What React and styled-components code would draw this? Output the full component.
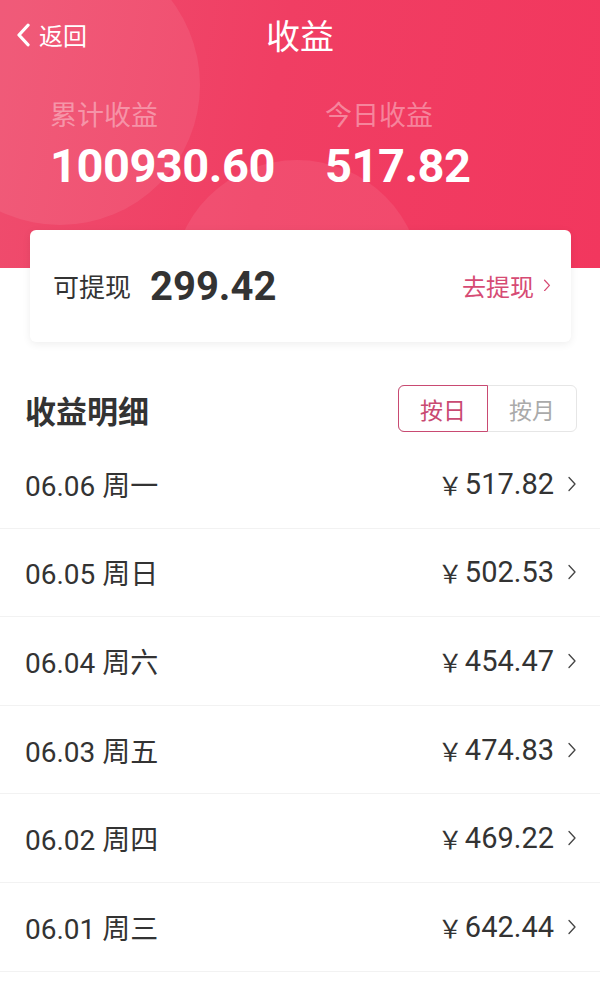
import styled, { createGlobalStyle } from "styled-components";

const GlobalStyle = createGlobalStyle`
  html, body {
    margin: 0;
    padding: 0;
    background: #fff;
    font-family: Roboto, "Noto Sans CJK SC", sans-serif;
  }
`;

const rows = [
    { date: "06.06", day: "周一", amount: "517.82" },
    { date: "06.05", day: "周日", amount: "502.53" },
    { date: "06.04", day: "周六", amount: "454.47" },
    { date: "06.03", day: "周五", amount: "474.83" },
    { date: "06.02", day: "周四", amount: "469.22" },
    { date: "06.01", day: "周三", amount: "642.44" },
];

const Chevron = ({ size = 14, color = "currentColor", width = 1.6, dir = "right" }) => (
    <svg width={size} height={size * 1.6} viewBox="0 0 10 16" fill="none">
        <path
            d={dir === "left" ? "M8 1.5 L2 8 L8 14.5" : "M2 1.5 L8 8 L2 14.5"}
            stroke={color}
            strokeWidth={width}
            strokeLinecap="round"
            strokeLinejoin="round"
        />
    </svg>
);

const App = () => {
    return (
        <Page>
            <GlobalStyle />
            <Header>
                <Bubble $x={-80} $y={-55} $size={280} />
                <Bubble $x={172} $y={160} $size={250} />
                <Nav>
                    <Back>
                        <Chevron size={15} color="#fff" width={2.2} dir="left" />
                        <span>返回</span>
                    </Back>
                    <Title>收益</Title>
                </Nav>
                <Stats>
                    <Stat>
                        <StatLabel>累计收益</StatLabel>
                        <StatValue>100930.60</StatValue>
                    </Stat>
                    <Stat>
                        <StatLabel>今日收益</StatLabel>
                        <StatValue>517.82</StatValue>
                    </Stat>
                </Stats>
            </Header>
            <Card>
                <CardLabel>可提现</CardLabel>
                <CardValue>299.42</CardValue>
                <Withdraw>
                    去提现
                    <Chevron size={8} color="#d64b74" width={1.6} />
                </Withdraw>
            </Card>
            <SectionHead>
                <SectionTitle>收益明细</SectionTitle>
                <Toggle>
                    <ToggleBtn $active>按日</ToggleBtn>
                    <ToggleBtn>按月</ToggleBtn>
                </Toggle>
            </SectionHead>
            <List>
                {rows.map((r) => (
                    <Row key={r.date}>
                        <RowDate>
                            {r.date} <span>{r.day}</span>
                        </RowDate>
                        <RowAmount>
                            <span>￥</span>
                            {r.amount}
                            <Chevron size={10} color="#444" width={1.3} />
                        </RowAmount>
                    </Row>
                ))}
            </List>
        </Page>
    );
};

const Page = styled.div`
    width: 600px;
    min-height: 981px;
    background: #fff;
    overflow: hidden;
`;

const Header = styled.div`
    position: relative;
    height: 268px;
    overflow: hidden;
    background: linear-gradient(100deg, #ef4d6e 0%, #f03e63 45%, #f2375e 100%);
`;

const Bubble = styled.div`
    position: absolute;
    left: ${(p) => p.$x}px;
    top: ${(p) => p.$y}px;
    width: ${(p) => p.$size}px;
    height: ${(p) => p.$size}px;
    border-radius: 50%;
    background: rgba(255, 255, 255, 0.08);
`;

const Nav = styled.div`
    position: relative;
    height: 70px;
    display: flex;
    align-items: center;
    justify-content: center;
`;

const Back = styled.div`
    position: absolute;
    left: 16px;
    top: 20px;
    display: flex;
    align-items: center;
    gap: 8px;
    color: #fff;
    font-family: "Noto Sans CJK SC", sans-serif;
    font-size: 24px;
    line-height: 30px;
`;

const Title = styled.div`
    color: #fff;
    font-family: "Noto Sans CJK SC", sans-serif;
    font-size: 34px;
    line-height: 40px;
`;

const Stats = styled.div`
    position: relative;
    display: grid;
    grid-template-columns: 275px 1fr;
    padding: 26px 0 0 50px;
`;

const Stat = styled.div`
    display: flex;
    flex-direction: column;
`;

const StatLabel = styled.div`
    color: rgba(255, 255, 255, 0.38);
    font-family: "Noto Sans CJK SC", sans-serif;
    font-size: 27px;
    line-height: 36px;
`;

const StatValue = styled.div`
    color: #fff;
    font-family: Roboto, sans-serif;
    font-weight: 700;
    font-size: 47px;
    line-height: 54px;
    margin-top: 7px;
    letter-spacing: -0.5px;
`;

const Card = styled.div`
    position: relative;
    margin: -38px 29px 0 30px;
    height: 112px;
    background: #fff;
    border-radius: 6px;
    box-shadow: 0 2px 8px rgba(0, 0, 0, 0.07);
    display: flex;
    align-items: center;
    padding: 0 20px 0 23px;
    box-sizing: border-box;
`;

const CardLabel = styled.div`
    color: #333;
    font-family: "Noto Sans CJK SC", sans-serif;
    font-size: 26px;
    margin-top: -2px;
`;

const CardValue = styled.div`
    margin-left: 19px;
    color: #333;
    font-family: Roboto, sans-serif;
    font-weight: 700;
    font-size: 40px;
`;

const Withdraw = styled.div`
    margin-left: auto;
    display: flex;
    align-items: center;
    gap: 9px;
    color: #d64b74;
    font-family: "Noto Sans CJK SC", sans-serif;
    font-size: 24px;
    margin-top: -2px;
`;

const SectionHead = styled.div`
    display: flex;
    align-items: center;
    justify-content: space-between;
    padding: 43px 23px 0 25px;
`;

const SectionTitle = styled.div`
    color: #333;
    font-family: "Noto Sans CJK SC", sans-serif;
    font-weight: 700;
    font-size: 31px;
    line-height: 40px;
    margin-top: 2px;
`;

const Toggle = styled.div`
    display: flex;
    height: 47px;
    border: 1px solid #e6e6e6;
    border-radius: 6px;
    box-sizing: border-box;
`;

const ToggleBtn = styled.div`
    width: 88px;
    display: flex;
    align-items: center;
    justify-content: center;
    margin: -1px 0;
    font-family: "Noto Sans CJK SC", sans-serif;
    font-size: 23px;
    color: ${(p) => (p.$active ? "#c94a72" : "#aaa")};
    border: ${(p) => (p.$active ? "1.5px solid #c94a72" : "none")};
    border-radius: ${(p) => (p.$active ? "6px 0 0 6px" : "0")};
    margin-left: ${(p) => (p.$active ? "-1px" : "0")};
`;

const List = styled.div`
    margin-top: 8px;
`;

const Row = styled.div`
    height: 88.6px;
    display: flex;
    align-items: center;
    justify-content: space-between;
    padding: 0 23px 0 25px;
    border-bottom: 1px solid #f2f2f2;
    box-sizing: border-box;
`;

const RowDate = styled.div`
    color: #333;
    font-family: Roboto, "Noto Sans CJK SC", sans-serif;
    font-size: 28px;
    span {
        font-family: "Noto Sans CJK SC", sans-serif;
        font-size: 28px;
    }
`;

const RowAmount = styled.div`
    display: flex;
    align-items: center;
    color: #333;
    font-family: Roboto, sans-serif;
    font-size: 29px;
    span {
        font-family: "Noto Sans CJK SC", sans-serif;
        font-size: 25px;
        margin-right: 2px;
    }
    svg {
        margin-left: 13px;
    }
`;

export default App;
